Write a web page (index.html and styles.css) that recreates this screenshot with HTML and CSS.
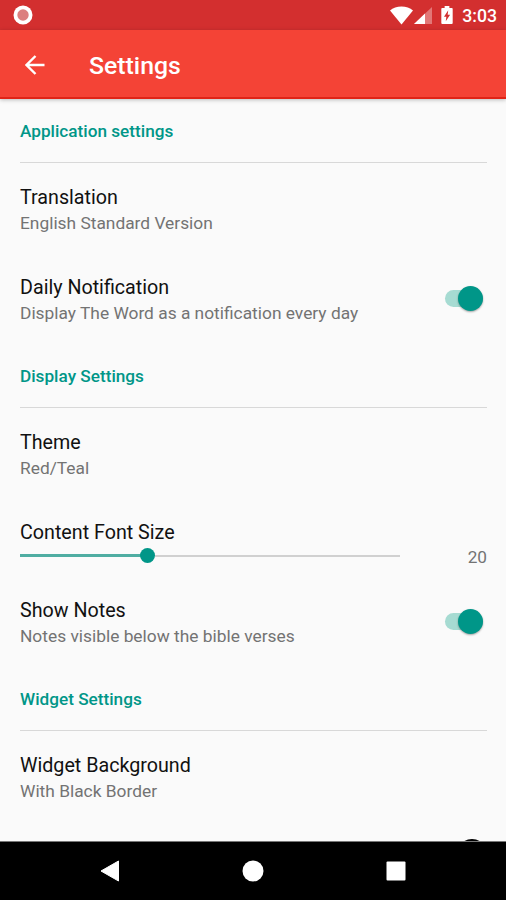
FILE: index.html
```
<!DOCTYPE html>
<html lang="en">
<head>
    <meta charset="UTF-8">
    <meta name="viewport" content="width=device-width, initial-scale=1.0">
    <title>Settings</title>
    <link rel="stylesheet" href="styles.css">
</head>
<body>
    <div class="screen">
        <!-- Status bar -->
        <div class="status-bar">
            <svg class="record" width="20" height="20" viewBox="0 0 20 20">
                <circle cx="10" cy="10" r="9.5" fill="#fff"/>
                <circle cx="10" cy="10" r="5.7" fill="#dc7f7f"/>
            </svg>
            <div class="status-icons">
                <svg class="wifi" width="23" height="19" viewBox="0 0 23 19">
                    <path d="M11.5 18.5L0 4.6C3 2 7 .5 11.5 .5S20 2 23 4.6z" fill="#fff"/>
                </svg>
                <svg class="signal" width="18" height="17" viewBox="0 0 18 17">
                    <path d="M0 17L18 0v17z" fill="#fff" fill-opacity=".35"/>
                    <path d="M0 17L11 6.6V17z" fill="#fff"/>
                </svg>
                <svg class="battery" width="12" height="18" viewBox="0 0 12 19">
                    <path d="M3.5 0h5v2H11q1 0 1 1v15q0 1-1 1H1q-1 0-1-1V3q0-1 1-1h2.5z" fill="#fff"/>
                    <path d="M7.3 4.5L2.8 11.3H5.3L4.7 16.2L9.3 9.3H6.7z" fill="#d32f2f"/>
                </svg>
                <span class="time">3:03</span>
            </div>
        </div>

        <!-- Toolbar -->
        <header class="toolbar">
            <svg width="20" height="20" viewBox="0 0 20 20">
                <path d="M19.5 10H2M10.5 1L1.5 10l9 9" fill="none" stroke="#fff" stroke-width="2.4"/>
            </svg>
            <h1>Settings</h1>
        </header>

        <!-- Preferences -->
        <main class="prefs">
            <h2 class="section">Application settings</h2>
            <div class="row">
                <div class="label">
                    <div class="title">Translation</div>
                    <div class="summary">English Standard Version</div>
                </div>
            </div>
            <div class="row">
                <div class="label">
                    <div class="title">Daily Notification</div>
                    <div class="summary">Display The Word as a notification every day</div>
                </div>
                <div class="switch"><div class="thumb"></div></div>
            </div>

            <h2 class="section">Display Settings</h2>
            <div class="row">
                <div class="label">
                    <div class="title">Theme</div>
                    <div class="summary">Red/Teal</div>
                </div>
            </div>
            <div class="row slider-row">
                <div class="label">
                    <div class="title">Content Font Size</div>
                    <div class="slider">
                        <div class="fill" style="width: 33.3%"></div>
                        <div class="knob"></div>
                        <div class="rest"></div>
                    </div>
                </div>
                <div class="value">20</div>
            </div>
            <div class="row">
                <div class="label">
                    <div class="title">Show Notes</div>
                    <div class="summary">Notes visible below the bible verses</div>
                </div>
                <div class="switch"><div class="thumb"></div></div>
            </div>

            <h2 class="section">Widget Settings</h2>
            <div class="row">
                <div class="label">
                    <div class="title">Widget Background</div>
                    <div class="summary">With Black Border</div>
                </div>
            </div>
            <div class="row color-row">
                <div class="color-dot"></div>
            </div>
        </main>

        <!-- Navigation bar -->
        <nav class="nav-bar">
            <svg width="20" height="22" viewBox="0 0 20 22">
                <path d="M18.5 1v20L1 11z" fill="#fff" stroke="#fff" stroke-linejoin="round"/>
            </svg>
            <svg width="22" height="22" viewBox="0 0 22 22">
                <circle cx="11" cy="11" r="10.5" fill="#fff"/>
            </svg>
            <svg width="20" height="20" viewBox="0 0 20 20">
                <rect x=".5" y=".5" width="19" height="19" rx="1" fill="#fff"/>
            </svg>
        </nav>
    </div>
</body>
</html>
```
FILE: styles.css
```
* {
    box-sizing: border-box;
}
body {
    margin: 0;
    font-family: Roboto, "Liberation Sans", sans-serif;
    background-color: #fafafa;
}
.screen {
    display: flex;
    flex-direction: column;
    width: 506px;
    height: 900px;
    overflow: hidden;
}

/* Status bar */
.status-bar {
    flex: none;
    display: flex;
    justify-content: space-between;
    align-items: center;
    height: 30px;
    padding: 0 9px 0 13px;
    background-color: #d32f2f;
}
.status-icons {
    display: flex;
    align-items: center;
}
.signal {
    margin-left: 1px;
}
.battery {
    margin-left: 9px;
}
.time {
    margin-left: 9px;
    color: #fff;
    font-size: 17.7px;
    font-weight: 500;
    line-height: 30px;
    padding-top: 2px;
}

/* Toolbar */
.toolbar {
    flex: none;
    display: flex;
    align-items: center;
    height: 69px;
    padding: 2px 25px 0;
    background-color: #f44336;
    border-bottom: 2px solid #e02417;
    box-shadow: 0 1px 4px rgba(0, 0, 0, 0.25);
    z-index: 1;
}
.toolbar h1 {
    margin: 2px 0 0 44px;
    color: #fff;
    font-size: 24.8px;
    font-weight: 500;
    line-height: 30px;
}

/* Preferences */
.prefs {
    flex: 1;
    min-height: 0;
    overflow: hidden;
}
.section {
    height: 64px;
    margin: 0 19px 0 20px;
    padding-top: 22px;
    border-bottom: 1px solid #d8d8d8;
    color: #009688;
    font-size: 17.2px;
    font-weight: 500;
    line-height: 20px;
}
.row + .section {
    height: 65px;
    padding-top: 23px;
}
.row {
    display: flex;
    justify-content: space-between;
    height: 90px;
    padding: 23px 19px 0 20px;
}
.title {
    color: #111;
    font-size: 19.7px;
    line-height: 24px;
}
.summary {
    margin-top: 3px;
    color: #737373;
    font-size: 17.35px;
    line-height: 20px;
}
.switch {
    display: flex;
    justify-content: flex-end;
    align-items: center;
    width: 38px;
    height: 17px;
    margin: 14px 4px 0 0;
    border-radius: 9px;
    background-color: #a6dbd2;
}
.thumb {
    flex: none;
    width: 25px;
    height: 25px;
    border-radius: 50%;
    background-color: #009688;
    box-shadow: 0 1px 2px rgba(0, 0, 0, 0.35);
}
.slider-row {
    height: 78px;
}
.slider {
    display: flex;
    align-items: center;
    width: 380px;
    height: 15px;
    margin-top: 3px;
}
.slider .fill {
    height: 3px;
    margin-right: -7px;
    background-color: #4fada2;
}
.slider .knob {
    flex: none;
    width: 15px;
    height: 15px;
    border-radius: 50%;
    background-color: #009688;
    z-index: 1;
}
.slider .rest {
    flex: 1;
    height: 2px;
    background-color: #d0d0d0;
}
.value {
    margin-top: 26px;
    color: #737373;
    font-size: 17.2px;
    line-height: 20px;
}
.color-row {
    justify-content: flex-end;
    padding-top: 18px;
    padding-right: 19px;
}
.color-dot {
    width: 30px;
    height: 30px;
    border-radius: 50%;
    background-color: #000;
}

/* Navigation bar */
.nav-bar {
    flex: none;
    display: flex;
    justify-content: center;
    align-items: center;
    gap: 122px;
    height: 59px;
    border-top: 1px solid #777;
    background-color: #000;
}
```
